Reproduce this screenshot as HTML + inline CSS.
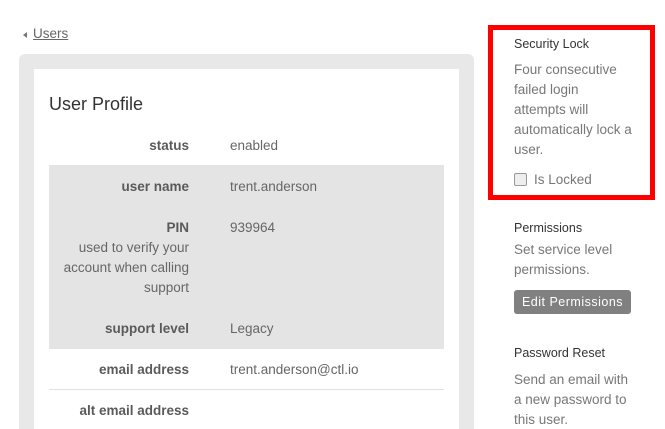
<!DOCTYPE html>
<html><head><style>
html,body{margin:0;width:665px;height:429px;overflow:hidden;background:#fff;font-family:"Liberation Sans",sans-serif;position:relative}
.a{position:absolute;white-space:nowrap}
.l{position:absolute;right:476px;text-align:right;font-size:13.5px;color:#5a5a5a;line-height:20px;font-weight:bold}
.v{position:absolute;left:230px;font-size:13.5px;color:#666;line-height:20px}
.r{position:absolute;left:514px;font-size:13.5px;color:#777;line-height:20px}
.h{position:absolute;left:514px;font-size:12.5px;color:#333;line-height:20px}
</style></head><body>
<div class="a" style="left:23px;top:32px;width:0;height:0;border-top:3.5px solid transparent;border-bottom:3.5px solid transparent;border-right:4px solid #777"></div>
<div class="a" style="left:33px;top:26px;font-size:13.5px;color:#666;text-decoration:underline">Users</div>
<div class="a" style="left:19px;top:54px;width:455px;height:380px;background:#e8e8e8;border-radius:6px"></div>
<div class="a" style="left:34px;top:69px;width:425px;height:360px;background:#fff"></div>
<div class="a" style="left:49px;top:94px;font-size:18px;color:#333">User Profile</div>
<div class="a" style="left:49px;top:165px;width:395px;height:184px;background:#e4e4e4"></div>
<div class="a" style="left:49px;top:389px;width:395px;height:1px;background:#e2e2e2"></div>
<div class="l" style="top:136px">status</div><div class="v" style="top:136px">enabled</div>
<div class="l" style="top:177px">user name</div><div class="v" style="top:177px">trent.anderson</div>
<div class="l" style="top:218px">PIN</div><div class="v" style="top:218px">939964</div>
<div class="l" style="top:238px;font-weight:normal;color:#666">used to verify your<br>account when calling<br>support</div>
<div class="l" style="top:319px">support level</div><div class="v" style="top:319px">Legacy</div>
<div class="l" style="top:360px">email address</div><div class="v" style="top:360px">trent.anderson@ctl.io</div>
<div class="l" style="top:401px">alt email address</div>
<div class="a" style="left:488px;top:25px;width:157px;height:165px;border:5px solid #f00"></div>
<div class="h" style="top:34px">Security Lock</div>
<div class="r" style="top:60px">Four consecutive<br>failed login<br>attempts will<br>automatically lock a<br>user.</div>
<div class="a" style="left:514px;top:173px;width:11px;height:11px;border:1px solid #999;border-radius:2px;background:#eee"></div>
<div class="r" style="left:534px;top:170px">Is Locked</div>
<div class="h" style="top:218px">Permissions</div>
<div class="r" style="top:240px">Set service level<br>permissions.</div>
<div class="a" style="left:514px;top:290px;width:117px;height:24px;background:#808080;border-radius:3px;color:#fff;font-size:12.5px;line-height:24px;text-align:center;letter-spacing:0.5px">Edit Permissions</div>
<div class="h" style="top:343px">Password Reset</div>
<div class="r" style="top:370px">Send an email with<br>a new password to<br>this user.</div>
</body></html>
